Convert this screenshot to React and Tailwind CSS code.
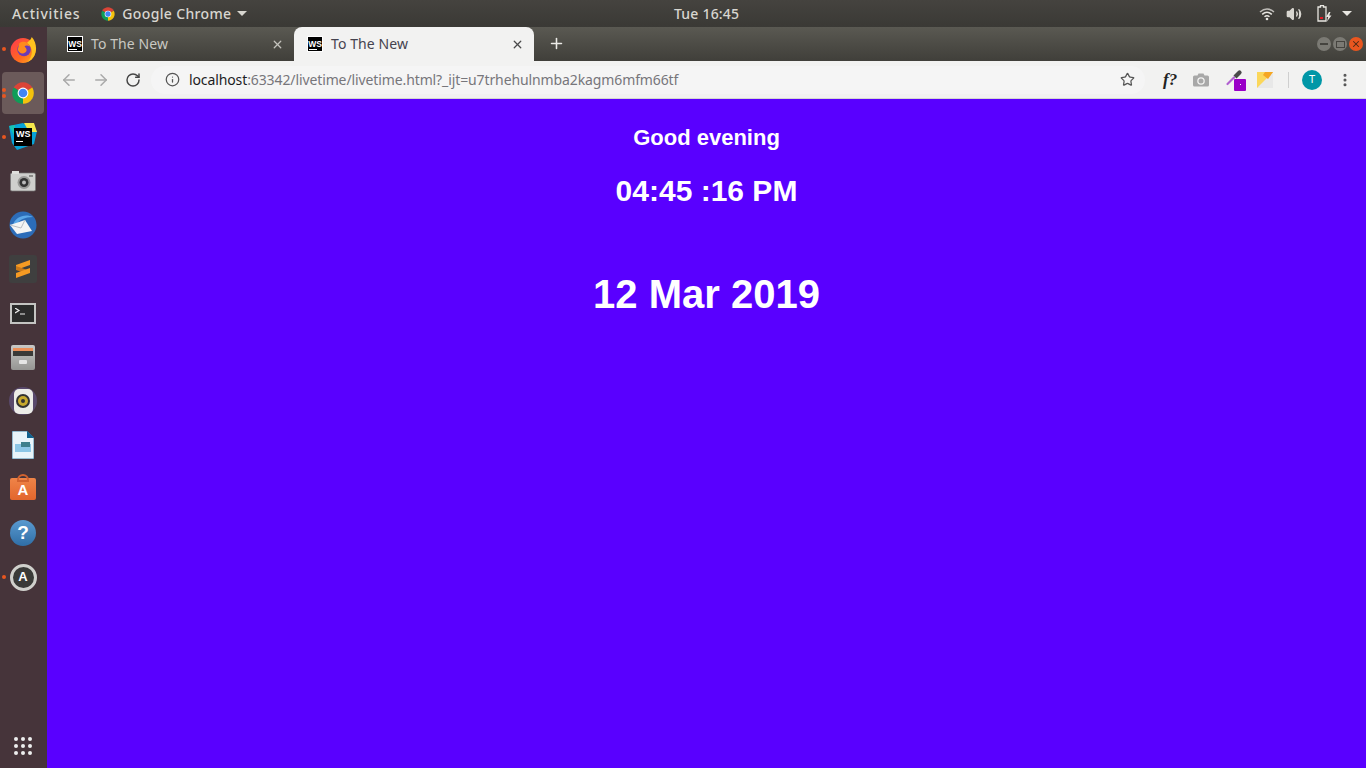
import React from "react";
import { ArrowLeft, ArrowRight, RotateCw, Info, Star, Plus, X, MoreVertical, Volume2 } from "lucide-react";

const uiFont = "font-['Noto_Sans','Open_Sans',sans-serif]";

function ChromeLogo({ size = 18 }) {
  return (
    <svg width={size} height={size} viewBox="0 0 48 48" className="shrink-0">
      <path d="M24 24 L6.700 14 A20 20 0 0 1 41.300 14 Z" fill="#db4437" />
      <path d="M24 24 L41.300 14 A20 20 0 0 1 24 44 Z" fill="#f4c20d" />
      <path d="M24 24 L24 44 A20 20 0 0 1 6.700 14 Z" fill="#0f9d58" />
      <circle cx="24" cy="24" r="10" fill="#fff" />
      <circle cx="24" cy="24" r="8" fill="#4285f4" />
    </svg>
  );
}

function WsFavicon() {
  return (
    <div className="flex h-4 w-4 shrink-0 flex-col items-center justify-center border border-white bg-black pt-px">
      <span className="font-['Liberation_Sans',sans-serif] text-[8.5px] leading-[8px] font-bold text-white">WS</span>
      <span className="mt-px mr-1 h-px w-2 bg-white" />
    </div>
  );
}

function Tab({ active }) {
  return (
    <div className={`flex h-[34px] w-[240px] items-center rounded-t-lg pr-[10px] pl-[13px] ${active ? "bg-[#f2f2f1] text-[#45434f]" : "text-[#c9c8c2]"}`}>
      <WsFavicon />
      <span className={`ml-2 flex-1 pb-[2px] text-[14px] tracking-[0.1px] ${uiFont}`}>To The New</span>
      <X size={13} strokeWidth={2.4} className={active ? "text-[#4a4a4a]" : "text-[#c4c3bd]"} />
    </div>
  );
}

function WifiIcon() {
  return (
    <svg width="16" height="14" viewBox="0 0 16 14" fill="none" stroke="#e8e6e1" strokeWidth="1.500">
      <path d="M1 5 Q8 -1 15 5" opacity="0.75" />
      <path d="M3.200 7.400 Q8 3 12.800 7.400" />
      <path d="M5.500 9.800 Q8 7.700 10.500 9.800" />
      <circle cx="8" cy="12" r="1.300" fill="#e8e6e1" stroke="none" />
    </svg>
  );
}

function BatteryIcon() {
  return (
    <svg width="15" height="17" viewBox="0 0 15 17">
      <path d="M3.500 .7h3v1.300h2.500v14h-8v-14h2.500z" fill="none" stroke="#e8e6e1" strokeWidth="1.300" />
      <rect x="3" y="12" width="3" height="2" fill="#e01b24" />
      <path d="M12 7 L9 12 h2.200 L10 16.500 L14.500 10.500 h-2.300 L13.500 7z" fill="#e8e6e1" />
    </svg>
  );
}

function TopBar() {
  return (
    <div className={`relative flex h-[27px] shrink-0 items-center bg-gradient-to-b from-[#45433f] to-[#3a3935] pr-[14px] pl-3 text-[14px] font-medium tracking-[0.2px] text-[#d8d6d0] ${uiFont}`}>
      <span className="tracking-[0.8px]">Activities</span>
      <div className="ml-5 flex items-center gap-[6px]">
        <ChromeLogo size={16} />
        <span className="tracking-[0.35px]">Google Chrome</span>
        <span className="h-0 w-0 border-x-[5px] border-t-[5px] border-x-transparent border-t-[#d8d6d0]" />
      </div>
      <span className="absolute left-[674px]">Tue 16:45</span>
      <div className="ml-auto flex items-center gap-[10px]">
        <WifiIcon />
        <Volume2 size={16} className="ml-[1px] fill-[#d8d6d0] text-[#d8d6d0]" />
        <div className="ml-[5px] flex">
          <BatteryIcon />
        </div>
        <span className="h-0 w-0 border-x-[5px] border-t-[5px] border-x-transparent border-t-[#e8e6e1]" />
      </div>
    </div>
  );
}

function WindowButtons() {
  return (
    <div className="ml-auto flex items-center gap-[2px] pr-[3px]">
      <div className="flex h-[14px] w-[14px] items-center justify-center rounded-full bg-[#7b7a74]">
        <span className="h-[2px] w-2 bg-[#45443f]" />
      </div>
      <div className="flex h-[14px] w-[14px] items-center justify-center rounded-full bg-[#7b7a74]">
        <span className="h-[7px] w-[9px] border border-[#45443f]" />
      </div>
      <div className="flex h-[14px] w-[14px] items-center justify-center rounded-full bg-[#e9561f]">
        <X size={10} strokeWidth={2.5} className="text-[#4b2a17]" />
      </div>
    </div>
  );
}

function TabStrip() {
  return (
    <div className="flex h-[34px] shrink-0 items-end bg-gradient-to-b from-[#5a5952] to-[#403f3a] pl-[7px]">
      <Tab />
      <Tab active />
      <Plus size={17} strokeWidth={2.2} className="mb-[9px] ml-[14px] text-[#ecebe7]" />
      <div className="mb-[10px] flex flex-1">
        <WindowButtons />
      </div>
    </div>
  );
}

function CameraGlyph() {
  return (
    <svg width="16" height="14" viewBox="0 0 16 14">
      <path d="M1.500 2.500h3l1-2h5l1 2h3a1.500 1.500 0 0 1 1.500 1.500v8a1.500 1.500 0 0 1-1.500 1.500h-13a1.500 1.500 0 0 1-1.500-1.500v-8a1.500 1.500 0 0 1 1.500-1.500z" fill="#a8a8a8" />
      <circle cx="8" cy="8" r="3.800" fill="#f2f2f1" />
      <circle cx="8" cy="8" r="2.500" fill="#a8a8a8" />
    </svg>
  );
}

function EyeDropper() {
  return (
    <div className="relative h-[22px] w-[21px]">
      <svg width="18" height="18" viewBox="0 0 18 18">
        <path d="M2.500 15 L9 8.500" stroke="#b060d0" strokeWidth="2.200" strokeLinecap="round" />
        <path d="M8.500 6.500 L13 2 a2 2 0 0 1 3 3 L11.500 9.500z" fill="#4a4a4a" />
      </svg>
      <div className="absolute top-[10px] left-[9px] flex h-3 w-3 items-center justify-center rounded-[1px] bg-[#9a00c8]">
        <span className="h-px w-px bg-white" />
      </div>
    </div>
  );
}

function NoteIcon() {
  return (
    <svg width="16" height="16" viewBox="0 0 16 16">
      <rect width="16" height="16" fill="#e8e8e8" />
      <path d="M0 0H16L0 16Z" fill="#fbd75b" />
      <path d="M8 0H16L11 7L6 3Z" fill="#f5a623" />
    </svg>
  );
}

function Toolbar() {
  return (
    <div className="flex h-[38px] shrink-0 items-center border-b border-[#d5d5d3] bg-[#f2f2f1]">
      <ArrowLeft size={18} strokeWidth={2} className="ml-[13px] text-[#a9a9a9]" />
      <ArrowRight size={18} strokeWidth={2} className="ml-[14px] text-[#a9a9a9]" />
      <RotateCw size={16} strokeWidth={2.2} className="ml-[15px] text-[#454545]" />
      <div className="ml-[10px] flex h-[28px] w-[994px] items-center rounded-full bg-[#f5f5f5] pl-[14px]">
        <Info size={15} strokeWidth={2} className="text-[#555]" />
        <span className={`ml-[9px] text-[14px] tracking-[-0.11px] text-[#77767b] ${uiFont}`}>
          <span className="text-[#1d1d1f]">localhost</span>:63342/livetime/livetime.html?_ijt=u7trhehulnmba2kagm6mfm66tf
        </span>
        <Star size={15} strokeWidth={2} className="mr-[10px] ml-auto text-[#555]" />
      </div>
      <span className="ml-[18px] font-['Liberation_Serif',serif] text-[17px] font-bold text-[#222] italic">f?</span>
      <div className="ml-[16px] flex">
        <CameraGlyph />
      </div>
      <div className="ml-[16px]">
        <EyeDropper />
      </div>
      <div className="ml-[11px]">
        <NoteIcon />
      </div>
      <span className="ml-[15px] h-4 w-px bg-[#cfcfcf]" />
      <div className={`ml-[13px] flex h-5 w-5 items-center justify-center rounded-full bg-[#0097a7] text-[11px] text-white ${uiFont}`}>T</div>
      <MoreVertical size={16} strokeWidth={2.6} className="ml-[15px] text-[#555]" />
    </div>
  );
}

function FirefoxIcon() {
  return (
    <svg width="27" height="27" viewBox="0 0 26 26">
      <defs>
        <linearGradient id="ffBody" x1="0" y1="0" x2="1" y2="1">
          <stop offset="0" stopColor="#ff3750" />
          <stop offset="0.6" stopColor="#ff6a1f" />
          <stop offset="1" stopColor="#ffb01f" />
        </linearGradient>
      </defs>
      <circle cx="12.500" cy="14" r="12" fill="url(#ffBody)" />
      <path d="M21 1 C27 8 27 20 17 25 C23 18 22 10 16 7 C18 5 20 4 21 1Z" fill="#ffc21f" />
      <circle cx="13.500" cy="13" r="6.500" fill="#6b3bb5" />
      <path d="M9 7 C13 4 18 6 19 10 C17 9 15 9 14 10 C16 12 17 14 14.500 16 C12 18 8 16 7.500 13Z" fill="#ff8a1c" />
    </svg>
  );
}

function WebStormIcon() {
  return (
    <div className="relative h-[28px] w-[28px]">
      <svg width="28" height="28" viewBox="0 0 28 28" className="absolute inset-0">
        <path d="M0 3 L14 0 L28 8 L25 21 L8 27 L3 20Z" fill="#07a3d8" />
        <path d="M15 0 L25 0 L28 9 L20 9Z" fill="#f5e74c" />
        <path d="M0 3 L6 2 L6 14Z" fill="#17c3b2" />
      </svg>
      <div className="absolute top-[5px] left-[5px] flex h-[18px] w-[18px] flex-col bg-black pt-[2px] pl-[2px]">
        <span className="font-['Liberation_Sans',sans-serif] text-[9px] leading-[9px] font-bold text-white">WS</span>
        <span className="mt-[2px] h-px w-[7px] bg-white" />
      </div>
    </div>
  );
}

function CameraApp() {
  return (
    <svg width="26" height="22" viewBox="0 0 26 22">
      <rect x="0.500" y="3" width="25" height="18" rx="1.500" fill="#cfcfcd" stroke="#777" strokeWidth="0.700" />
      <rect x="2" y="1" width="7" height="3" fill="#dededc" />
      <rect x="19" y="5" width="4" height="2" fill="#8a8a88" />
      <circle cx="14" cy="12.500" r="6.500" fill="#9a9a98" />
      <circle cx="14" cy="12.500" r="4.500" fill="#333" />
      <circle cx="14" cy="12.500" r="2" fill="#bbb" />
    </svg>
  );
}

function MailIcon() {
  return (
    <svg width="28" height="28" viewBox="0 0 28 28">
      <circle cx="14" cy="14" r="13.500" fill="#2c6cb8" />
      <path d="M4 14 C6 6 16 2 24 6 C16 6 10 9 8 13Z" fill="#5ba7e8" />
      <path d="M1 14 L16 9 L23 20 L8 23Z" fill="#f4f4f4" />
      <path d="M1 14 L12 17 L16 9" fill="none" stroke="#b9bdc2" />
    </svg>
  );
}

function SublimeIcon() {
  return (
    <div className="flex h-7 w-7 items-center justify-center rounded-[3px] bg-[#3f3f3f]">
      <svg width="14" height="20" viewBox="0 0 14 20" fill="#f59a23">
        <path d="M0 6 L14 1 V6 L0 11Z" />
        <path d="M0 7 L14 12 V13 L10 14.500 L0 11Z" fill="#c9781a" />
        <path d="M0 14 L14 9 V14 L0 19Z" />
      </svg>
    </div>
  );
}

function TerminalIcon() {
  return (
    <div className="flex h-[21px] w-[26px] border-2 border-[#c4c4c2] bg-[#2b2b2b] pt-[3px] pl-[3px]">
      <svg width="11" height="8" viewBox="0 0 11 8" fill="none" stroke="#eee" strokeWidth="1.200">
        <path d="M0 0 L4 2.500 L0 5 M5 6H10" />
      </svg>
    </div>
  );
}

function FilesIcon() {
  return (
    <div className="flex h-[25px] w-6 flex-col items-center rounded-[2px] bg-gradient-to-b from-[#c8c8c6] to-[#959593]">
      <div className="mt-[3px] h-[8px] w-5 border-t-[3px] border-[#eb8f5a] bg-[#3a3a38]" />
      <div className="mt-[4px] h-1 w-2 rounded-[1px] bg-[#e5e5e5]" />
    </div>
  );
}

function RhythmIcon() {
  return (
    <div className="flex h-7 w-7 items-center justify-center rounded-full bg-[#59496c]">
      <div className="flex h-[25px] w-[19px] items-center justify-center rounded-[5px] bg-[#ecece8]">
        <div className="flex h-[14px] w-[14px] items-center justify-center rounded-full border-2 border-[#333] bg-[#c7a92e]">
          <div className="h-1 w-1 rounded-full bg-[#333]" />
        </div>
      </div>
    </div>
  );
}

function WriterIcon() {
  return (
    <svg width="22" height="28" viewBox="0 0 22 28">
      <path d="M0 0 H15 L22 7 V28 H0Z" fill="#e8f4fa" stroke="#1c6a94" strokeWidth="0.800" />
      <path d="M15 0 L22 7 H15Z" fill="#11618e" />
      <rect x="3" y="13" width="16" height="8" fill="#8cc6e6" />
      <path d="M9 11 h9 v5 h-9z" fill="#3d7f8c" />
    </svg>
  );
}

function SoftwareIcon() {
  return (
    <div className="relative flex h-[22px] w-[26px] items-center justify-center rounded-[2px] bg-gradient-to-b from-[#ef8448] to-[#e2652c] pt-[2px] font-['Liberation_Sans',sans-serif] text-[15px] font-bold text-white">
      <span className="absolute -top-1 h-2 w-3 rounded-t-md border-2 border-[#d2622f]" />
      A
    </div>
  );
}

function HelpIcon() {
  return (
    <div className="flex h-[26px] w-[26px] items-center justify-center rounded-full bg-gradient-to-b from-[#5a9ad0] to-[#2f6ea6] font-['Liberation_Sans',sans-serif] text-[19px] font-bold text-white">?</div>
  );
}

function UpdaterIcon() {
  return (
    <div className="flex h-[27px] w-[27px] items-center justify-center rounded-full border-[3px] border-[#d0d0cc] bg-[#3a3a38] font-['Liberation_Sans',sans-serif] text-[13px] font-bold text-white">A</div>
  );
}

function DockItem({ icon, pips = 0, active }) {
  return (
    <div className={`relative flex w-[42px] shrink-0 items-center justify-center self-start ${active ? "my-px h-[42px] rounded-[4px] bg-[#6b5a5a]" : "h-[44px]"}`}>
      {pips > 0 && (
        <div className="absolute top-0 bottom-0 left-0 flex flex-col justify-center gap-[2px]">
          {Array.from({ length: pips }).map((_, i) => (
            <span key={i} className="h-1 w-1 rounded-full bg-[#e9561f]" />
          ))}
        </div>
      )}
      {icon}
    </div>
  );
}

function Dock() {
  return (
    <div className="flex w-[47px] shrink-0 flex-col items-center bg-[#46343a] pl-[2px]">
      <DockItem icon={<FirefoxIcon />} pips={1} />
      <DockItem icon={<ChromeLogo size={26} />} pips={2} active />
      <DockItem icon={<WebStormIcon />} pips={1} />
      <DockItem icon={<CameraApp />} />
      <DockItem icon={<MailIcon />} />
      <DockItem icon={<SublimeIcon />} />
      <DockItem icon={<TerminalIcon />} />
      <DockItem icon={<FilesIcon />} />
      <DockItem icon={<RhythmIcon />} />
      <DockItem icon={<WriterIcon />} />
      <DockItem icon={<SoftwareIcon />} />
      <DockItem icon={<HelpIcon />} />
      <DockItem icon={<UpdaterIcon />} pips={1} />
      <div className="mt-auto mr-[3px] mb-[13px] grid grid-cols-3 gap-[3px]">
        {Array.from({ length: 9 }).map((_, i) => (
          <span key={i} className="h-1 w-1 rounded-full bg-[#eeeeee]" />
        ))}
      </div>
    </div>
  );
}

export default function App() {
  return (
    <div className="flex h-[768px] w-[1366px] flex-col overflow-hidden">
      <TopBar />
      <div className="flex min-h-0 flex-1">
        <Dock />
        <div className="flex min-w-0 flex-1 flex-col">
          <TabStrip />
          <Toolbar />
          <div className="flex flex-1 flex-col items-center bg-[#5900ff] pt-[25px] font-['Liberation_Sans',sans-serif] font-bold text-white">
            <div className="text-[22px] leading-[28px]">Good evening</div>
            <div className="mt-[22px] text-[30px] leading-[34px]">04:45 :16 PM</div>
            <div className="mt-[63px] text-[40px] leading-[46px]">12 Mar 2019</div>
          </div>
        </div>
      </div>
    </div>
  );
}
